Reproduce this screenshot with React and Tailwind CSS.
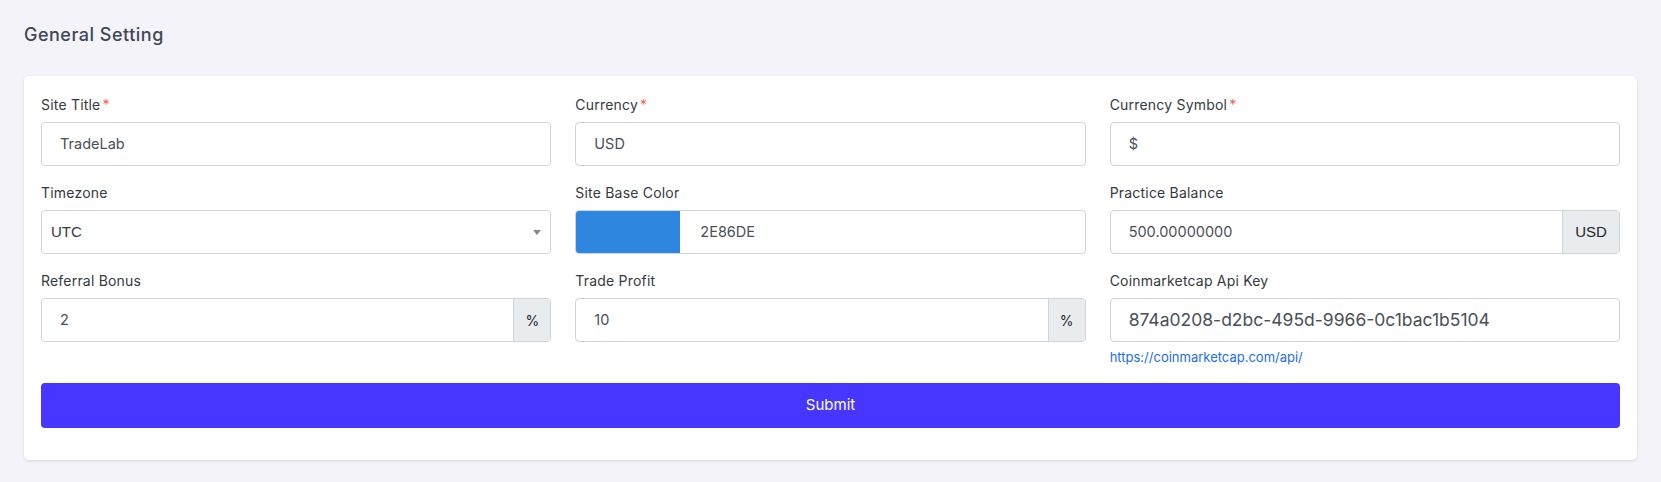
import { useState } from "react";

const font = { fontFamily: "Inter, 'Open Sans', sans-serif" };

function Label({ children, required }) {
  return (
    <label className="block text-[14px] leading-[20px] tracking-[0.2px] mb-[7px] text-[#343a40]">
      {children}
      {required && <span className="text-[#f06548] ml-[2px]">*</span>}
    </label>
  );
}

function TextInput({ value, big }) {
  return (
    <div
      className={`h-[44px] flex items-center border border-[#ced4da] rounded bg-white px-[18px] text-[#495057] ${
        big ? "text-[17.5px]" : "text-[14.5px]"
      }`}
    >
      {value}
    </div>
  );
}

function SuffixInput({ value, suffix, arial }) {
  return (
    <div className="h-[44px] flex border border-[#ced4da] rounded bg-white overflow-hidden">
      <div className="flex-1 flex items-center px-[18px] text-[14.5px] text-[#495057]">{value}</div>
      <div
        className={`flex items-center justify-center bg-[#e9ecef] border-l border-[#ced4da] text-[#212529] ${
          arial ? "w-[57px] text-[15px] font-['Liberation_Sans',Arial,sans-serif]" : "w-[37px] text-[14px]"
        }`}
      >
        {suffix}
      </div>
    </div>
  );
}

export default function App() {
  const [tz] = useState("UTC");

  return (
    <div className="min-h-screen bg-[#f3f3f9] px-6 pt-[23px] pb-6" style={font}>
      <h4 className="text-[18px] leading-[24px] tracking-[0.5px] font-medium text-[#3f4756] mb-[29px]">
        General Setting
      </h4>

      <div className="bg-white rounded-[5px] shadow-[0_1px_3px_rgba(56,65,74,0.15)] px-[17px] pt-[19px] pb-8">
        <div className="grid grid-cols-3 gap-x-6 gap-y-[17px]">
          <div>
            <Label required>Site Title</Label>
            <TextInput value="TradeLab" />
          </div>
          <div>
            <Label required>Currency</Label>
            <TextInput value="USD" />
          </div>
          <div>
            <Label required>Currency Symbol</Label>
            <TextInput value="$" />
          </div>

          <div>
            <Label>Timezone</Label>
            <div className="h-[44px] flex items-center justify-between border border-[#ced4da] rounded bg-white pl-[9px] pr-[9px] text-[15px] text-[#343a40] font-['Liberation_Sans',Arial,sans-serif]">
              <span>{tz}</span>
              <svg width="8" height="5" viewBox="0 0 8 5">
                <path d="M0 0h8L4 5z" fill="#888" />
              </svg>
            </div>
          </div>
          <div>
            <Label>Site Base Color</Label>
            <div className="h-[44px] flex border border-[#ced4da] rounded bg-white overflow-hidden">
              <div className="w-[104px] bg-[#2e86de]" />
              <div className="flex-1 flex items-center pl-[20px] text-[14.5px] text-[#495057]">2E86DE</div>
            </div>
          </div>
          <div>
            <Label>Practice Balance</Label>
            <SuffixInput value="500.00000000" suffix="USD" arial />
          </div>

          <div>
            <Label>Referral Bonus</Label>
            <SuffixInput value="2" suffix="%" />
          </div>
          <div>
            <Label>Trade Profit</Label>
            <SuffixInput value="10" suffix="%" />
          </div>
          <div>
            <Label>Coinmarketcap Api Key</Label>
            <TextInput value="874a0208-d2bc-495d-9966-0c1bac1b5104" big />
            <a href="#" className="block mt-[6px] text-[13px] leading-[18px] text-[#1c6df0]">
              https://coinmarketcap.com/api/
            </a>
          </div>
        </div>

        <button className="mt-[17px] w-full h-[45px] rounded bg-[#4636ff] text-white text-[15px] font-normal">
          Submit
        </button>
      </div>
    </div>
  );
}
